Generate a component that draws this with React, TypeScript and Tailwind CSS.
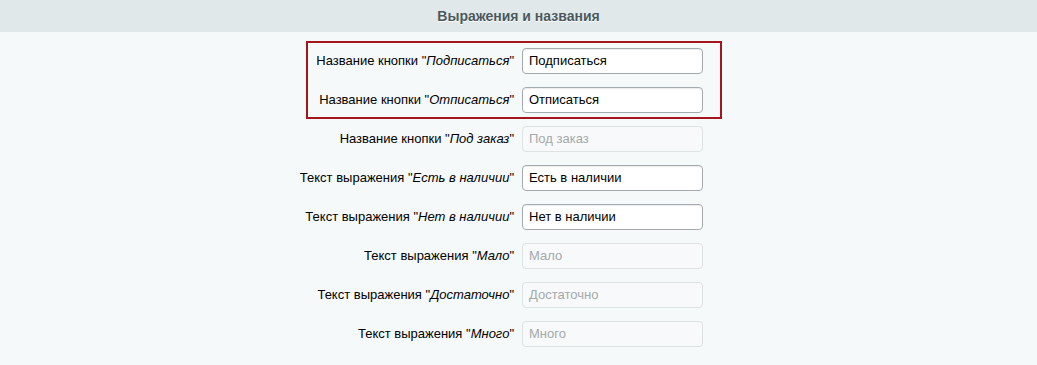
import React from 'react';

type Field = { prefix: string; name: string; value: string; disabled?: boolean };

const boxed: Field[] = [
  { prefix: 'Название кнопки', name: 'Подписаться', value: 'Подписаться' },
  { prefix: 'Название кнопки', name: 'Отписаться', value: 'Отписаться' },
];

const rest: Field[] = [
  { prefix: 'Название кнопки', name: 'Под заказ', value: 'Под заказ', disabled: true },
  { prefix: 'Текст выражения', name: 'Есть в наличии', value: 'Есть в наличии' },
  { prefix: 'Текст выражения', name: 'Нет в наличии', value: 'Нет в наличии' },
  { prefix: 'Текст выражения', name: 'Мало', value: 'Мало', disabled: true },
  { prefix: 'Текст выражения', name: 'Достаточно', value: 'Достаточно', disabled: true },
  { prefix: 'Текст выражения', name: 'Много', value: 'Много', disabled: true },
];

const Row: React.FC<{ field: Field }> = ({ field }) => (
  <div className="flex items-center gap-[8px]">
    <div className="flex w-[206px] shrink-0 justify-end">
      <label className="whitespace-nowrap text-[13px] leading-[16px] text-black">
        {field.prefix} "<i>{field.name}</i>"
      </label>
    </div>
    {field.disabled ? (
      <div className="flex h-[26px] w-[181px] items-center rounded-[4px] border border-[#dde2e4] bg-[#f7f9fa] pl-[6px] text-[13px] text-[#a4a9ac]">
        {field.value}
      </div>
    ) : (
      <div className="flex h-[26px] w-[181px] items-center rounded-[4px] border border-[#a3abaf] bg-white pl-[6px] text-[13px] text-black shadow-[inset_0_1px_1px_rgba(0,0,0,0.08)]">
        {field.value}
      </div>
    )}
  </div>
);

const App: React.FC = () => {
  return (
    <div className="h-[365px] w-[1037px] bg-[#f5f9fa] font-['Liberation_Sans',Arial,sans-serif]">
      <div className="flex h-[32px] items-center justify-center bg-[#e0e8ea] text-[14px] font-bold text-[#4a585c] [text-shadow:0_1px_0_#fff]">
        Выражения и названия
      </div>
      <div className="flex justify-center pr-[9px] pt-[9px]">
        <div className="w-[416px]">
          <div className="flex flex-col gap-[13px] border-2 border-[#a5161b] pb-[4px] pt-[5px]">
            {boxed.map((f) => (
              <Row key={f.name} field={f} />
            ))}
          </div>
          <div className="mt-[7px] flex flex-col gap-[13px] px-[2px]">
            {rest.map((f) => (
              <Row key={f.name} field={f} />
            ))}
          </div>
        </div>
      </div>
    </div>
  );
};

export default App;
